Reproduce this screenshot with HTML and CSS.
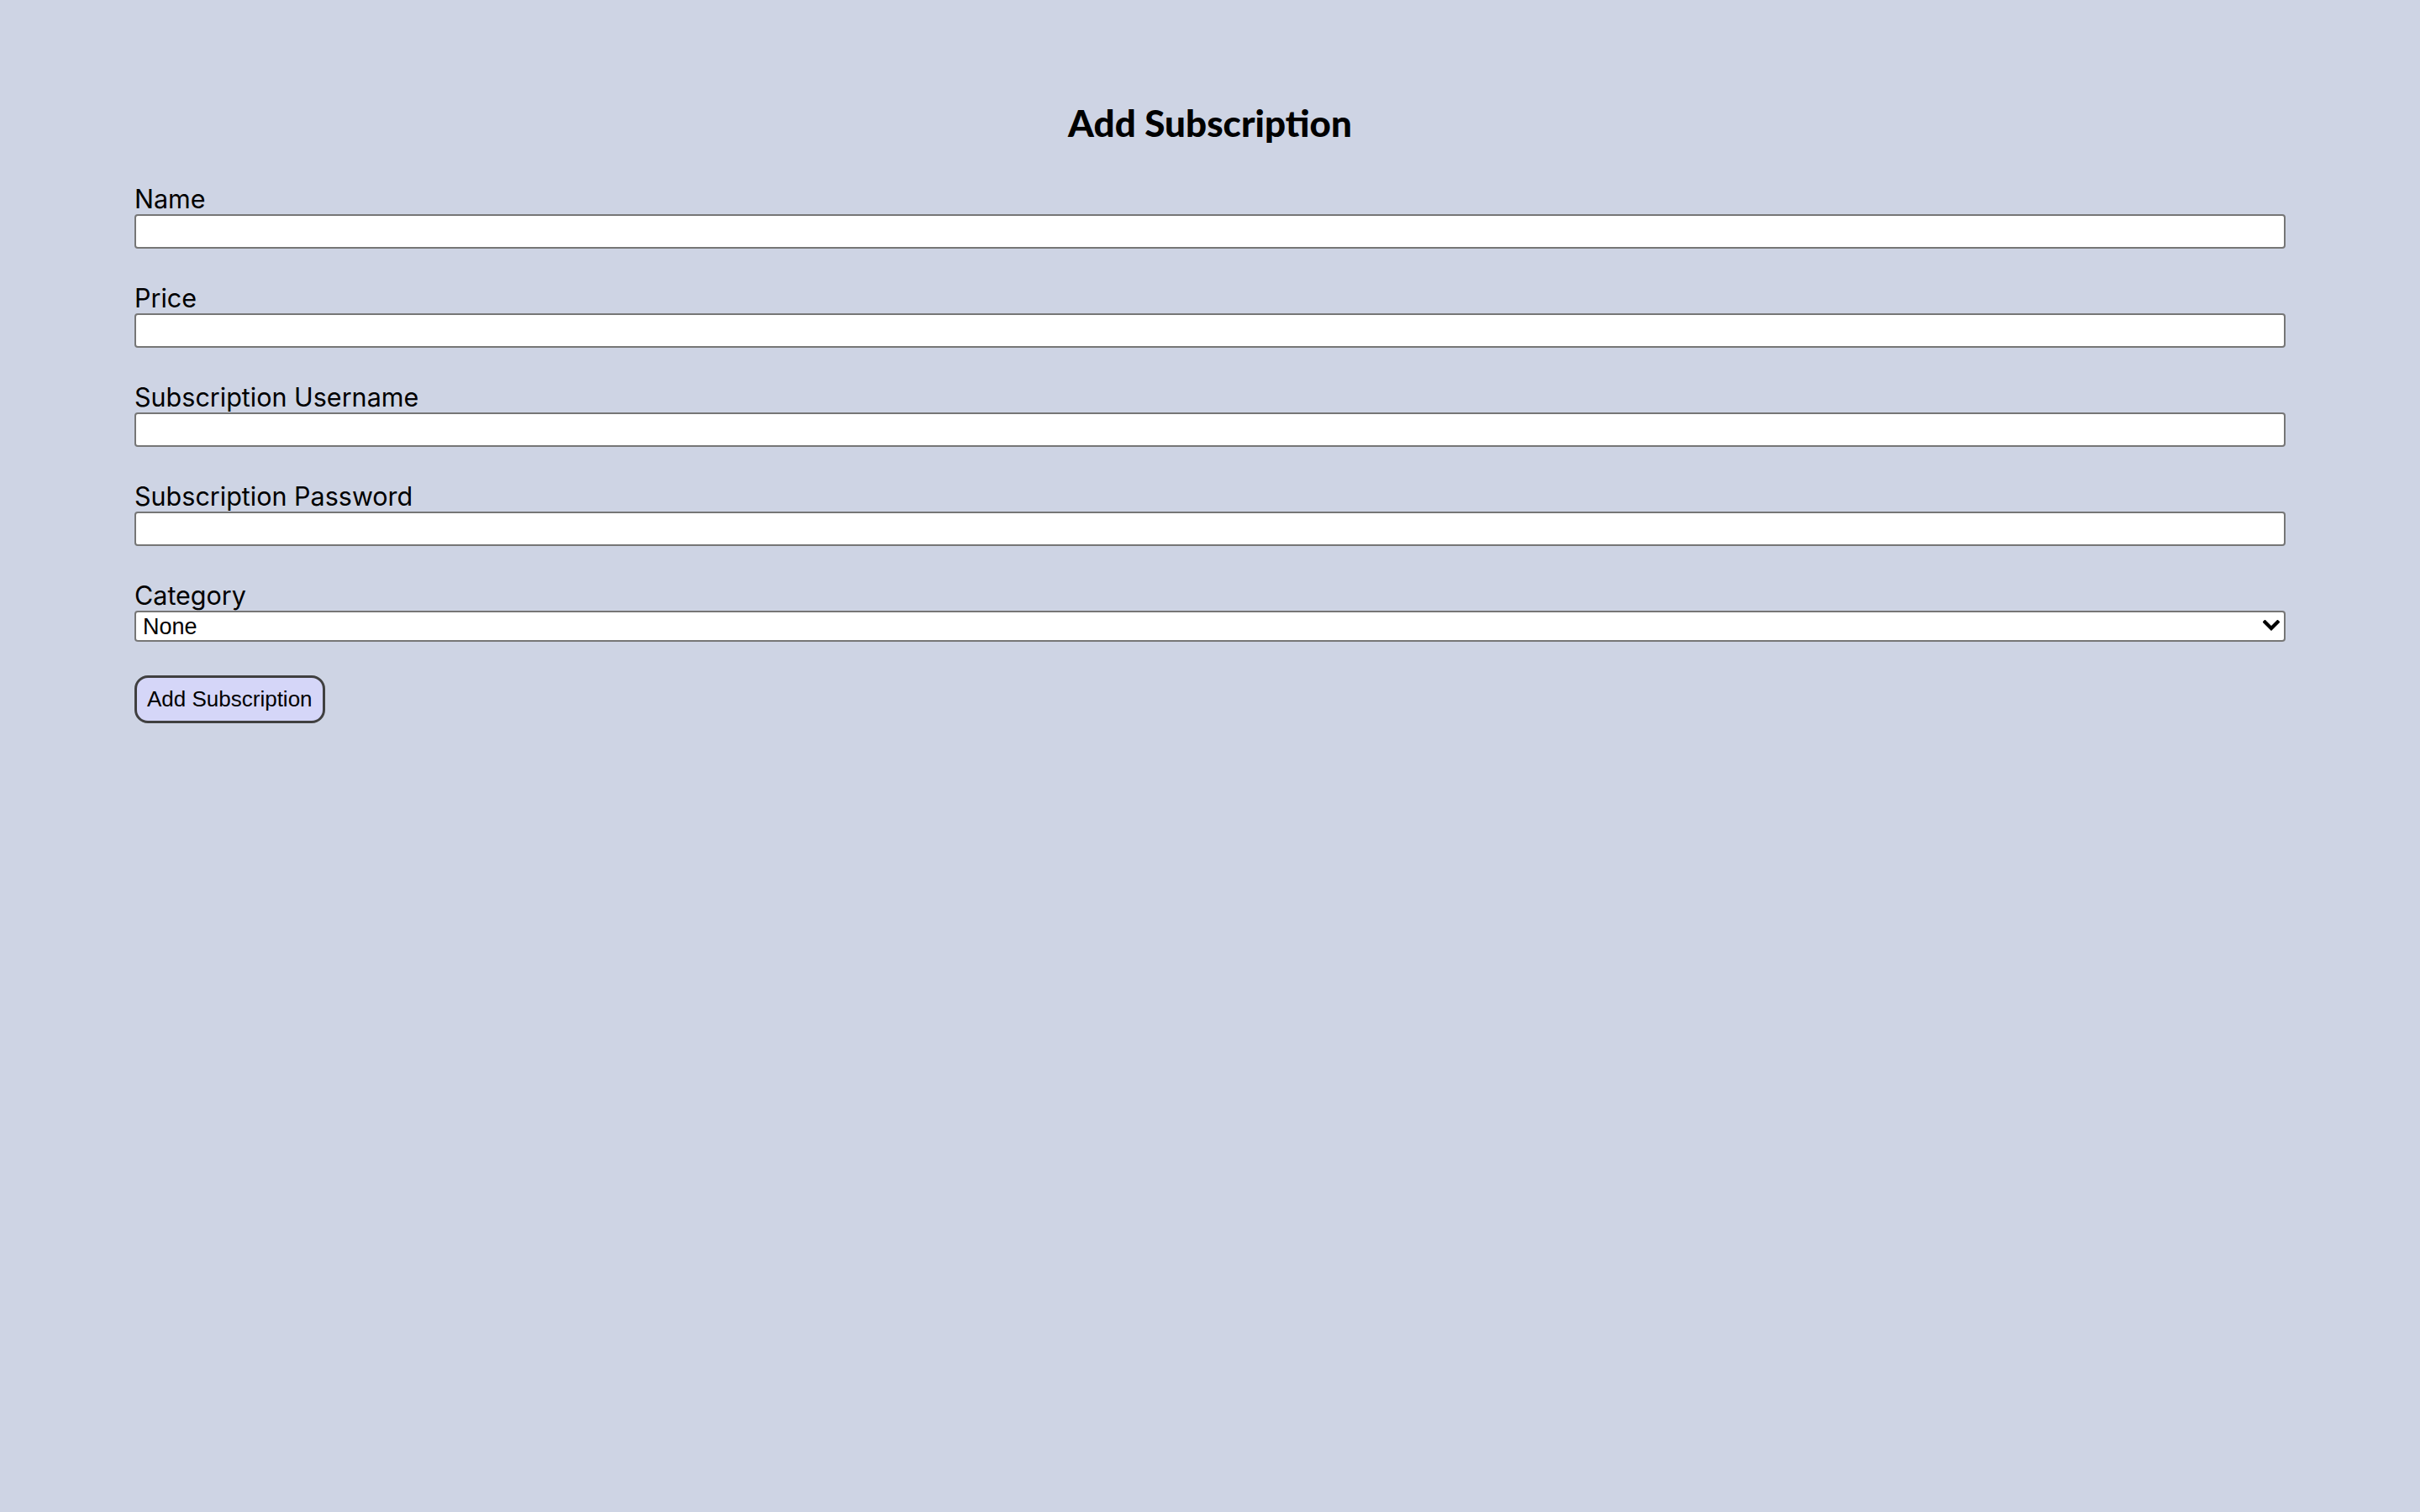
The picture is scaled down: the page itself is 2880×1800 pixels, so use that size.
FILE: index.html
```html
<!DOCTYPE html>
<html lang="en">
<head>
<meta charset="utf-8">
<title>Add Subscription</title>
<link rel="stylesheet" href="styles.css">
</head>
<body>
<main class="page">
  <h1 class="title">Add Subscription</h1>
  <form class="form">
    <div class="field">
      <label class="label" for="name">Name</label>
      <input class="input" id="name" type="text">
    </div>
    <div class="field">
      <label class="label" for="price">Price</label>
      <input class="input" id="price" type="text">
    </div>
    <div class="field">
      <label class="label" for="user">Subscription Username</label>
      <input class="input" id="user" type="text">
    </div>
    <div class="field">
      <label class="label" for="pass">Subscription Password</label>
      <input class="input" id="pass" type="password">
    </div>
    <div class="field">
      <label class="label" for="cat">Category</label>
      <div class="select-wrap">
        <select class="select" id="cat">
          <option>None</option>
        </select>
        <svg class="chevron" width="20" height="14" viewBox="0 0 20 14" aria-hidden="true">
          <path d="M2.5 2.5 L10 10 L17.5 2.5" fill="none" stroke="#000" stroke-width="4.2" stroke-linecap="square"/>
        </svg>
      </div>
    </div>
    <button class="btn" type="button">Add Subscription</button>
  </form>
</main>
</body>
</html>
```

FILE: styles.css
```css
html, body {
  margin: 0;
  padding: 0;
}
body {
  background: #ced4e4;
  min-height: 1800px;
  font-family: Inter, "Noto Sans", sans-serif;
  color: #000;
}
.page {
  padding: 117px 160px 0 160px;
}
.title {
  margin: 0 0 44px 0;
  text-align: center;
  font-family: Lato, sans-serif;
  font-weight: 900;
  font-size: 44px;
  line-height: 58px;
}
.form {
  display: flex;
  flex-direction: column;
}
.field {
  display: flex;
  flex-direction: column;
  margin-bottom: 41px;
}
.label {
  font-size: 30.5px;
  line-height: 36px;
}
.input {
  box-sizing: border-box;
  width: 100%;
  height: 41px;
  margin: 0;
  border: 2px solid #767676;
  border-radius: 4px;
  background: #fff;
  font-size: 26px;
}
.select-wrap {
  position: relative;
}
.select {
  box-sizing: border-box;
  display: block;
  width: 100%;
  height: 37px;
  margin: 0;
  border: 2px solid #767676;
  border-radius: 4px;
  background: #fff;
  font-family: "Liberation Sans", Arial, sans-serif;
  font-size: 27px;
  padding: 0 8px;
  color: #000;
  appearance: none;
  -webkit-appearance: none;
}
.chevron {
  position: absolute;
  right: 7px;
  top: 11px;
  pointer-events: none;
}
.btn {
  align-self: flex-start;
  margin-top: -1px;
  height: 57px;
  padding: 0 12px;
  border: 3px solid #404040;
  border-radius: 16px;
  background: #d5d6f8;
  font-family: "Liberation Sans", Arial, sans-serif;
  font-size: 26px;
  color: #000;
}
```
